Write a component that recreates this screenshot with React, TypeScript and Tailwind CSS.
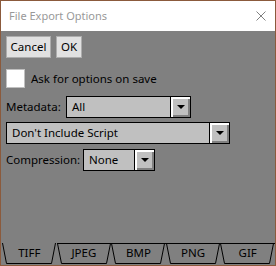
import React from "react";

const font = { fontFamily: '"Noto Sans", "Open Sans", Arial, sans-serif' };

function DropBtn() {
  return (
    <div className="w-[20px] h-full bg-[#c0c0c0] border-l border-black flex items-center justify-center shadow-[inset_2px_2px_0_#ffffff,inset_-2px_-2px_0_#808080]">
      <svg width="8" height="5" viewBox="0 0 8 5">
        <path d="M0 0 H8 L4 4 Z" fill="#000" />
      </svg>
    </div>
  );
}

function Select({ w, label }: { w: string; label: string }) {
  return (
    <div className={`${w} h-[22px] border border-black bg-[#c0c0c0] flex`}>
      <div className="flex-1 flex items-center pl-[5px] text-[11.5px] text-black">{label}</div>
      <DropBtn />
    </div>
  );
}

function Tab({ label, active }: { label: string; active?: boolean }) {
  return (
    <div className="relative w-[55px] h-[21px] flex items-center justify-center text-[11.5px] text-black">
      <svg className="absolute inset-0" width="55" height="21" viewBox="0 0 55 21">
        <path
          d={active ? "M0.5 0 L4.5 20.5 L49.5 20.5 L53.5 0" : "M0 0.5 H55 M0.5 0.5 L4.5 20.5 L49.5 20.5 L53.5 0.5"}
          fill="none"
          stroke="#000"
          strokeWidth="1"
        />
      </svg>
      <span className="relative -mt-[1px]">{label}</span>
    </div>
  );
}

export default function App() {
  return (
    <div style={font} className="w-[276px] h-[266px] border border-[#8b5a3c] flex flex-col bg-[#808080]">
      <div className="h-[30px] bg-white flex items-center justify-between pl-[8px] pr-[9px]">
        <span className="text-[11px] text-[#999999]">File Export Options</span>
        <svg width="10" height="10" viewBox="0 0 10 10">
          <path d="M0.5 0.5 L9.5 9.5 M9.5 0.5 L0.5 9.5" stroke="#808080" strokeWidth="1" />
        </svg>
      </div>
      <div className="flex-1 flex flex-col bg-[#808080] pl-[5px] pt-[5px]">
        <div className="flex gap-[5px]">
          <button className="w-[45px] h-[22px] bg-[#e1e1e1] border border-[#adadad] text-[11.5px] text-black">Cancel</button>
          <button className="w-[26px] h-[22px] bg-[#e1e1e1] border border-[#adadad] text-[11.5px] text-black">OK</button>
        </div>
        <div className="flex items-center mt-[11px] gap-[6px]">
          <div className="w-[19px] h-[19px] bg-white border border-[#c0c0c0]" />
          <span className="text-[11.5px] text-black">Ask for options on save</span>
        </div>
        <div className="flex items-center mt-[8px] gap-[5px]">
          <span className="text-[11.5px] text-black w-[55px]">Metadata:</span>
          <Select w="w-[125px]" label="All" />
        </div>
        <div className="mt-[4px]">
          <Select w="w-[224px]" label="Don't Include Script" />
        </div>
        <div className="flex items-center mt-[5px] gap-[5px]">
          <span className="text-[11.5px] text-black w-[72px]">Compression:</span>
          <Select w="w-[72px]" label="None" />
        </div>
        <div className="flex-1" />
        <div className="flex -ml-[4px] mb-[1px]">
          <Tab label="TIFF" active />
          <Tab label="JPEG" />
          <Tab label="BMP" />
          <Tab label="PNG" />
          <Tab label="GIF" />
        </div>
      </div>
    </div>
  );
}
